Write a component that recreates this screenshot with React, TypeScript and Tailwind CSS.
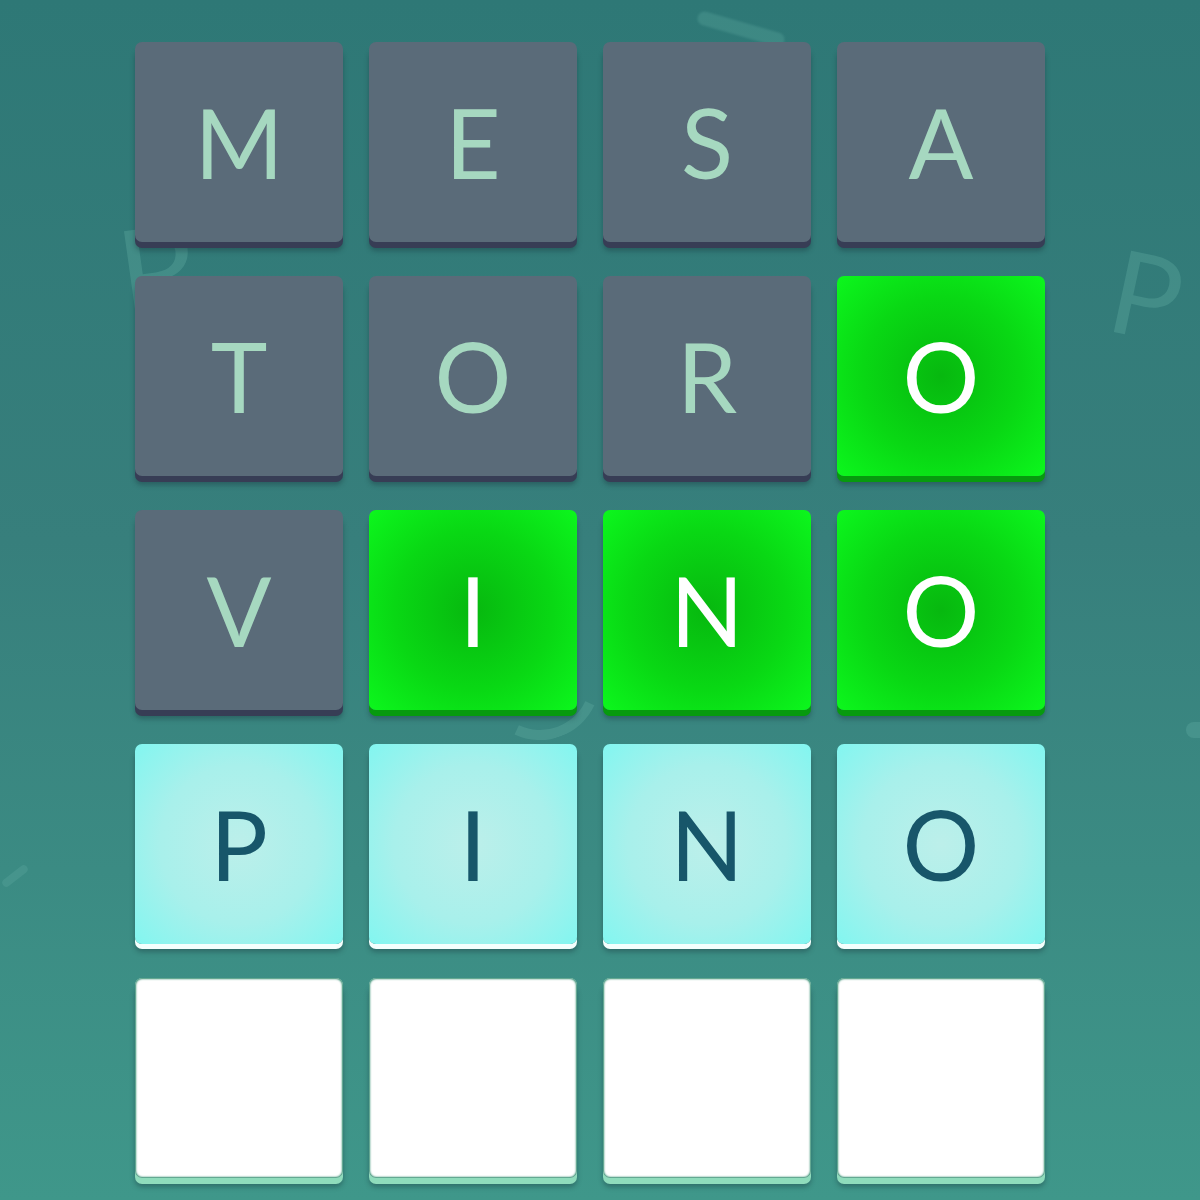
import React from 'react';

type TileKind = 'miss' | 'hit' | 'current' | 'empty';

const rows: { letter: string; kind: TileKind }[][] = [
  [
    { letter: 'M', kind: 'miss' },
    { letter: 'E', kind: 'miss' },
    { letter: 'S', kind: 'miss' },
    { letter: 'A', kind: 'miss' },
  ],
  [
    { letter: 'T', kind: 'miss' },
    { letter: 'O', kind: 'miss' },
    { letter: 'R', kind: 'miss' },
    { letter: 'O', kind: 'hit' },
  ],
  [
    { letter: 'V', kind: 'miss' },
    { letter: 'I', kind: 'hit' },
    { letter: 'N', kind: 'hit' },
    { letter: 'O', kind: 'hit' },
  ],
  [
    { letter: 'P', kind: 'current' },
    { letter: 'I', kind: 'current' },
    { letter: 'N', kind: 'current' },
    { letter: 'O', kind: 'current' },
  ],
  [
    { letter: '', kind: 'empty' },
    { letter: '', kind: 'empty' },
    { letter: '', kind: 'empty' },
    { letter: '', kind: 'empty' },
  ],
];

const tileStyles: Record<TileKind, string> = {
  miss: 'bg-[#5a6b79] text-[#a6d8c0] shadow-[0_6px_0_#373d55,0_9px_5px_rgba(20,40,50,0.35)]',
  hit: 'bg-[radial-gradient(circle_at_50%_50%,#07b80f_0%,#09d814_55%,#0cf71d_100%)] text-white shadow-[0_6px_0_#079a0e,0_9px_5px_rgba(20,40,50,0.35)]',
  current:
    'bg-[radial-gradient(circle_at_50%_50%,#bcefea_0%,#a8f0eb_55%,#82f6f0_100%)] text-[#17566a] shadow-[0_5px_0_#f4fffd,0_8px_5px_rgba(20,40,50,0.35)]',
  empty:
    'bg-white shadow-[inset_0_0_2px_1px_#2d8a6c,0_6px_0_#8fdcbc,0_9px_5px_rgba(20,40,50,0.35)]',
};

const Tile: React.FC<{ letter: string; kind: TileKind }> = ({ letter, kind }) => (
  <div
    className={`h-[200px] rounded-[7px] flex items-center justify-center text-[96px] leading-none font-normal ${tileStyles[kind]}`}
    style={{ fontFamily: 'Lato, "Open Sans", sans-serif' }}
  >
    {letter}
  </div>
);

const App: React.FC = () => {
  return (
    <div className="relative w-[1200px] h-[1200px] overflow-hidden bg-[linear-gradient(180deg,#2e7876_0%,#377f7c_45%,#3f978a_100%)]">
      {/* faint letters drifting behind the board */}
      <div
        className="absolute inset-0 text-[#5aa59c] opacity-60"
        style={{ fontFamily: 'Lato, sans-serif' }}
      >
        <span className="absolute left-[1112px] top-[236px] text-[116px] leading-none rotate-[12deg] opacity-70">P</span>
        <span className="absolute left-[118px] top-[205px] text-[130px] leading-none -rotate-[8deg] opacity-70">R</span>
        <div className="absolute left-[480px] top-[620px] w-[120px] h-[120px] rounded-full border-[10px] border-transparent border-b-[#5aa59c] rotate-[-20deg] opacity-70" />
        <div className="absolute left-[696px] top-[22px] w-[90px] h-[14px] rounded-full bg-[#5aa59c] rotate-[16deg] opacity-60 blur-[1px]" />
        <div className="absolute left-[0px] top-[872px] w-[30px] h-[8px] rounded-full bg-[#5aa59c] -rotate-[38deg] opacity-60" />
        <div className="absolute left-[1186px] top-[722px] w-[30px] h-[16px] rounded-l-full bg-[#5aa59c] opacity-70" />
      </div>

      <div className="relative pt-[42px] pl-[135px]">
        <div className="grid grid-cols-[repeat(4,208px)] gap-x-[26px] gap-y-[34px]">
          {rows.map((row, r) =>
            row.map((cell, c) => <Tile key={`${r}-${c}`} letter={cell.letter} kind={cell.kind} />)
          )}
        </div>
      </div>
    </div>
  );
};

export default App;
